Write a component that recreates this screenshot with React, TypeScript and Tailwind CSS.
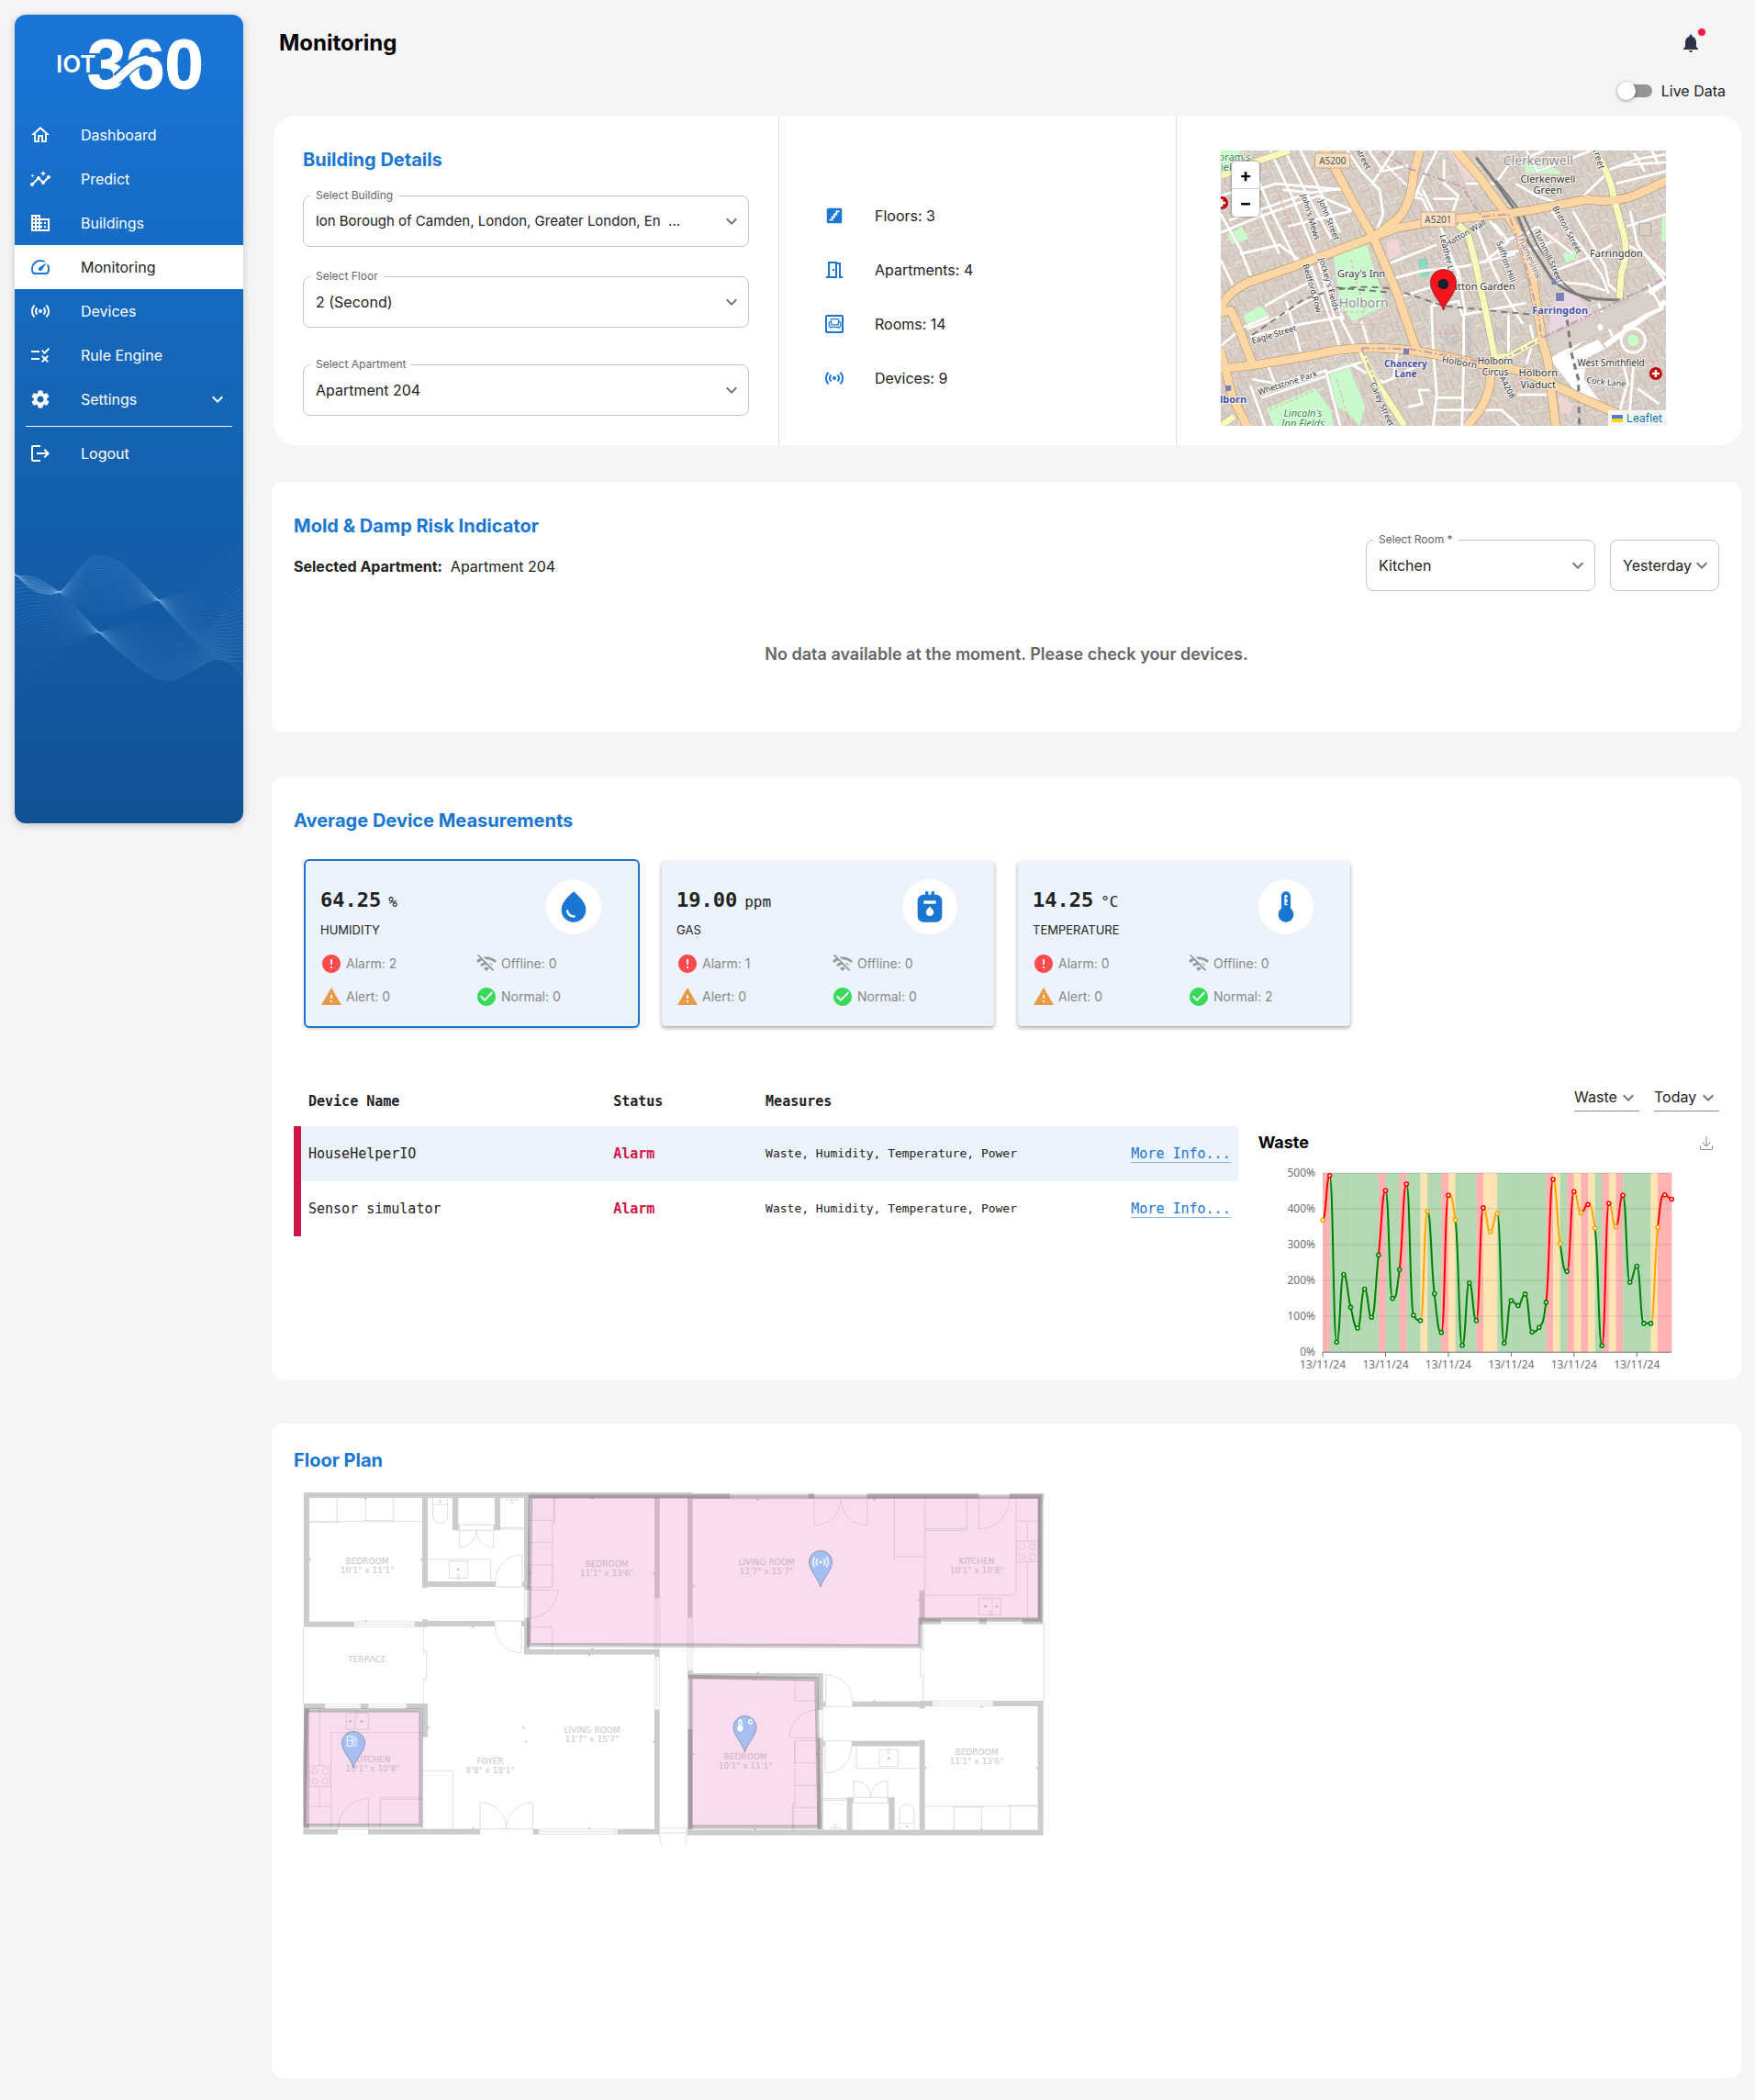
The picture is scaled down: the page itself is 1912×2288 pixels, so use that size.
import type { ReactNode } from "react";
import {
  MdBusiness,
  MdCheckCircle,
  MdDeviceThermostat,
  MdError,
  MdGasMeter,
  MdInsights,
  MdKeyboardArrowDown,
  MdLogout,
  MdNotifications,
  MdOutlineChair,
  MdOutlineHome,
  MdOutlineLocalGasStation,
  MdOutlineMeetingRoom,
  MdRule,
  MdSensors,
  MdSettings,
  MdSpeed,
  MdStairs,
  MdThermostat,
  MdWarning,
  MdWaterDrop,
  MdWifiOff,
} from "react-icons/md";

const MONO = "font-['DejaVu_Sans_Mono','Liberation_Mono',monospace]";

/* ---------- sidebar ---------- */

function Logo() {
  return (
    <svg viewBox="0 0 168 64" className="h-[64px] w-[168px]" role="img" aria-label="IOT 360">
      <text x="34" y="60" fontSize="76" fontWeight="700" fill="#fff" stroke="#fff" strokeWidth="1" fontFamily="Liberation Sans, Arial, sans-serif">
        360
      </text>
      <path d="M66 50C76 43 82 31 97 29" fill="none" stroke="#1975d2" strokeWidth="13" />
      <path d="M50 56C70 58 78 30 100 29" fill="none" stroke="#fff" strokeWidth="9" />
      <rect x="32" y="22" width="17" height="23" fill="#1975d2" />
      <text x="0" y="43" fontSize="26" fontWeight="600" fill="#fff" fontFamily="Inter, sans-serif">
        IOT
      </text>
    </svg>
  );
}

const waveX = [0, 16, 32, 49, 66, 82, 99, 116, 132, 149, 166, 182, 199, 216, 232, 248];
const waves = {
  crest: [315, 362, 383, 375, 318, 265, 262, 285, 328, 380, 438, 492, 540, 580, 600, 600],
  rise: [325, 324, 342, 378, 418, 437, 443, 440, 428, 410, 392, 378, 345, 300, 255, 215],
  low: [720, 670, 620, 575, 540, 518, 500, 482, 475, 475, 478, 490, 500, 480, 400, 330],
  dip: [325, 326, 345, 378, 425, 478, 530, 575, 615, 648, 662, 650, 622, 597, 605, 650],
};

function blend(a: number[], b: number[], t: number) {
  const pts = waveX.map((x, i) => [x, (a[i] + (b[i] - a[i]) * t - 200) / 3]);
  let d = `M${pts[0][0]} ${pts[0][1].toFixed(1)}`;
  for (let i = 0; i < pts.length - 1; i++) {
    const p0 = pts[Math.max(i - 1, 0)];
    const p1 = pts[i];
    const p2 = pts[i + 1];
    const p3 = pts[Math.min(i + 2, pts.length - 1)];
    d += `C${(p1[0] + (p2[0] - p0[0]) / 6).toFixed(1)} ${(p1[1] + (p2[1] - p0[1]) / 6).toFixed(1)} ${(
      p2[0] -
      (p3[0] - p1[0]) / 6
    ).toFixed(1)} ${(p2[1] - (p3[1] - p1[1]) / 6).toFixed(1)} ${p2[0]} ${p2[1].toFixed(1)}`;
  }
  return d;
}

function Waves() {
  const steps = Array.from({ length: 30 }, (_, i) => i / 29);
  return (
    <svg viewBox="0 0 248 180" className="w-full" fill="none" stroke="#8fc0f0" strokeWidth="0.6" aria-hidden="true">
      {steps.map((t) => (
        <path key={`a${t}`} d={blend(waves.crest, waves.rise, t)} opacity={0.32 - t * 0.2} />
      ))}
      {steps.map((t) => (
        <path key={`b${t}`} d={blend(waves.dip, waves.low, t)} opacity={0.32 - t * 0.24} />
      ))}
    </svg>
  );
}

const nav = [
  { label: "Dashboard", Icon: MdOutlineHome },
  { label: "Predict", Icon: MdInsights },
  { label: "Buildings", Icon: MdBusiness },
  { label: "Monitoring", Icon: MdSpeed, active: true },
  { label: "Devices", Icon: MdSensors },
  { label: "Rule Engine", Icon: MdRule },
  { label: "Settings", Icon: MdSettings, expandable: true },
];

function Sidebar() {
  return (
    <aside className="my-4 ml-4 flex h-[881px] w-[249px] shrink-0 flex-col overflow-hidden rounded-xl bg-linear-to-b from-[#1976d8] to-[#115293] text-white shadow-[0_2px_10px_rgba(0,0,0,0.2)]">
      <a href="#home" className="mt-5 ml-[45px] block w-[168px]">
        <Logo />
      </a>
      <nav className="mt-[23px] flex flex-col">
        <ul className="flex flex-col">
          {nav.map(({ label, Icon, active, expandable }) => (
            <li key={label} className={active ? "h-12 bg-white text-[#222]" : "h-12"}>
              <a href={`#${label}`} className="flex h-full items-center px-4">
                <Icon className={active ? "size-6 text-[#1976d2]" : "size-6"} />
                <span className="ml-8 flex-1">{label}</span>
                {expandable && <MdKeyboardArrowDown className="size-6" />}
              </a>
            </li>
          ))}
        </ul>
        <hr className="mx-3 mt-[5px] mb-[5px] border-white" />
        <a href="#logout" className="flex h-12 items-center px-4">
          <MdLogout className="size-6" />
          <span className="ml-8">Logout</span>
        </a>
      </nav>
      <div className="mt-[68px]">
        <Waves />
      </div>
    </aside>
  );
}

/* ---------- form controls ---------- */

type SelectProps = { id: string; label: string; value: string; hideLabel?: boolean; dense?: boolean; className?: string };

function OutlinedSelect({ id, label, value, hideLabel, dense, className }: SelectProps) {
  return (
    <div className={`relative ${className ?? ""}`}>
      <label htmlFor={id} className={hideLabel ? "sr-only" : "absolute -top-2 left-2 bg-white px-1.5 text-xs leading-4 text-[#666]"}>
        {label}
      </label>
      <select
        id={id}
        className={`h-14 w-full appearance-none rounded-lg border border-[#c4c4c4] bg-white pr-6 pl-[13px] text-[#222] ${dense ? "text-[15px]" : ""}`}
      >
        <option>{value}</option>
      </select>
      <MdKeyboardArrowDown className="pointer-events-none absolute top-4 right-[7px] size-6 text-[#757575]" />
    </div>
  );
}

function UnderlinedSelect({ id, label, value }: { id: string; label: string; value: string }) {
  return (
    <div className="relative">
      <label htmlFor={id} className="sr-only">
        {label}
      </label>
      <select id={id} className="h-[31px] appearance-none border-b border-[#8c8c8c] bg-white pr-6 text-[#222]">
        <option>{value}</option>
      </select>
      <MdKeyboardArrowDown className="pointer-events-none absolute top-1 right-0 size-6 text-[#757575]" />
    </div>
  );
}

/* ---------- map ---------- */

const mx = (x: number) => (x - 77) / 2.562;
const my = (y: number) => (y - 492) / 3;

const streets = [
  "M215 492L275 640L330 800L420 1045", "M255 492L320 640L385 780", "M300 492L345 600L410 760", "M160 530L215 680L290 860",
  "M150 600L190 700L240 830", "M77 700L130 810L160 900", "M77 760L180 710L350 640L450 690", "M130 640L230 600L420 620",
  "M130 830L240 800L330 880", "M100 720L200 680L300 640", "M265 740L440 690", "M250 620L330 630L420 615", "M430 492L470 560L520 620L530 700L510 760",
  "M560 492L500 600L520 620", "M600 640L640 650L660 700", "M680 492L650 560L620 640", "M640 620L690 740L740 900L700 980L665 1000",
  "M700 520L700 600L740 640L725 690", "M670 650L740 650", "M760 600L850 600", "M550 860L680 800", "M560 910L640 885L760 870L900 830",
  "M580 970L660 940", "M665 1000L740 985L750 1030L930 990", "M740 880L760 1030", "M790 740L830 860L870 960L920 1060",
  "M840 730L880 790L860 810L810 860", "M870 790L905 770", "M820 710L860 770", "M150 1075L230 1040L340 970L390 920",
  "M77 1130L140 1070L210 1035", "M200 1000L260 960L330 920", "M260 985L300 1150", "M330 870L400 1100L410 1140", "M350 860L395 1040",
  "M160 1100L300 1060L420 1035", "M77 850L110 930", "M410 1040L450 1130", "M470 1050L490 1130", "M665 1000L670 1150L680 1290L670 1392",
  "M755 1030L755 1190L750 1392", "M680 1300L750 1300", "M680 1340L860 1340L910 1392", "M600 1330L640 1320L630 1275L660 1275",
  "M880 1030L880 1180", "M940 1060L950 1110L930 1190", "M850 830L960 810L1000 790", "M900 600L960 640L1010 660", "M850 590L880 540L980 492",
  "M930 492L960 560L1050 520L1110 492", "M1000 690L1080 800L1140 900L1160 960", "M960 740L1060 830", "M1060 690L1150 870L1160 930L1190 960",
  "M1090 640L1160 560", "M1180 600L1319 560", "M1150 560L1240 520L1319 505", "M1230 500L1260 560", "M1200 540L1319 530", "M1280 492L1300 540",
  "M1210 740L1319 700", "M1220 690L1240 800L1319 920", "M1210 800L1260 830L1319 900", "M1000 920L1100 930L1150 950", "M1020 880L1110 840L1170 800",
  "M900 790L960 740", "M160 1260L200 1392", "M165 1240L260 1260L370 1210L410 1392", "M190 1300L370 1230", "M210 1200L230 1260L330 1220",
  "M370 1220L480 1180", "M440 1190L530 1250L570 1230", "M480 1160L520 1250L590 1392", "M570 1150L560 1230L640 1190",
  "M1100 1250L1210 1260L1180 1392", "M1060 1200L1200 1190L1215 1260", "M1130 990L1170 1100", "M905 1290L960 1290L1000 1290", "M1230 1180L1215 1392",
  "M1270 930L1310 1010L1200 1070", "M1240 1270L1300 1320", "M77 640L130 620", "M490 492L530 560L600 540", "M540 540L590 600L640 640",
];
const majors = [
  "M370 492L400 560L450 670L500 770L530 850L570 960L610 1100L625 1145",
  "M77 1010Q90 960 150 925L260 880L400 820L500 775L570 745L690 720L870 700L950 685L1100 652Q1180 665 1240 635L1319 592",
  "M632 492L615 570Q605 690 560 725L515 765",
  "M735 492L800 580L850 660Q890 720 910 770L945 900L965 1040L975 1120L990 1180L1000 1280L1012 1392",
  "M77 1205L160 1195L300 1168L400 1145Q520 1125 660 1155L800 1190Q900 1195 1000 1255L1100 1310L1190 1355",
  "M77 1020L105 1015L130 1080L165 1190",
  "M77 1150L95 1230L110 1300L150 1392",
  "M830 1195Q835 1280 800 1340L765 1392",
];
const minors = [
  "M1120 492Q1165 570 1175 650L1195 740Q1220 820 1195 890L1190 975",
  "M740 735L765 760Q785 840 795 900L815 1010L842 1168L880 1165L965 1110",
  "M77 575L170 530L270 492",
  "M470 1150L500 1230L550 1320L590 1392",
  "M77 1392L115 1360",
];
const footways = [
  "M240 640L290 780L360 900", "M440 850L480 1020L350 1020", "M560 560L600 620", "M1060 860L1090 780L1140 760", "M90 1240L170 1230",
  "M420 1000L430 1060L520 1060", "M1190 1150L1240 1200L1290 1180", "M400 1240L440 1392", "M670 1090L750 1090L750 1140",
  "M920 1200L900 1300L960 1330", "M1270 830L1319 870", "M215 1340L340 1275", "M480 500L560 640",
];

type Label = { x: number; y: number; t: string; s?: number; c?: string; r?: number; w?: number; i?: boolean };
const mapLabels: Label[] = [
  { x: 963, y: 540, t: "Clerkenwell", s: 14, c: "#8d8d8d" },
  { x: 990, y: 597, t: "Clerkenwell" },
  { x: 990, y: 634, t: "Green" },
  { x: 1181, y: 841, t: "Farringdon" },
  { x: 469, y: 907, t: "Gray's Inn" },
  { x: 476, y: 1005, t: "Holborn", s: 14, c: "#8d8d8d" },
  { x: 800, y: 949, t: "Hatton Garden" },
  { x: 1024, y: 1025, t: "Farringdon", s: 11, c: "#4a50a8", w: 700 },
  { x: 593, y: 1199, t: "Chancery", s: 10, c: "#4a50a8", w: 700 },
  { x: 593, y: 1234, t: "Lane", s: 10, c: "#4a50a8", w: 700 },
  { x: 103, y: 1317, t: "olborn", c: "#4a50a8", w: 700 },
  { x: 843, y: 1191, t: "Holborn", s: 10 },
  { x: 843, y: 1227, t: "Circus", s: 10 },
  { x: 963, y: 1230, t: "Holborn" },
  { x: 963, y: 1270, t: "Viaduct" },
  { x: 1166, y: 1198, t: "West Smithfield", s: 10 },
  { x: 1152, y: 1258, t: "Cock Lane", s: 9, r: 6 },
  { x: 742, y: 1194, t: "Holborn", s: 10, r: 10 },
  { x: 306, y: 1361, t: "Lincoln's", c: "#2f8b3c", i: true },
  { x: 306, y: 1396, t: "Inn Fields", c: "#2f8b3c", i: true },
  { x: 115, y: 524, t: "oram's", c: "#2f8b3c" },
  { x: 100, y: 559, t: "Fields", c: "#2f8b3c" },
  { x: 228, y: 1102, t: "Eagle Street", s: 9, r: -17 },
  { x: 266, y: 1260, t: "Whetstone Park", s: 9, r: -18 },
  { x: 764, y: 770, t: "Hatton Wall", s: 9, r: -30 },
  { x: 320, y: 712, t: "John's Mews", s: 9, r: 73 },
  { x: 372, y: 722, t: "John Street", s: 9, r: 68 },
  { x: 325, y: 945, t: "Bedford Row", s: 9, r: 74 },
  { x: 372, y: 932, t: "Jockey's Fields", s: 9, r: 74 },
  { x: 705, y: 850, t: "Leather Lane", s: 9, r: 76 },
  { x: 866, y: 858, t: "Saffron Hill", s: 9, r: 70 },
  { x: 985, y: 842, t: "Turnmill Street", s: 9, r: 65 },
  { x: 1037, y: 755, t: "Britton Street", s: 9, r: 62 },
  { x: 930, y: 842, t: "Thameslink", s: 10, r: 66, c: "#8b7a70" },
  { x: 520, y: 1325, t: "Carey Street", s: 9, r: 66 },
  { x: 468, y: 522, t: "Street", s: 9, r: 62 },
  { x: 1122, y: 515, t: "Street", s: 10, r: 72 },
  { x: 870, y: 1270, t: "A4208", s: 9, r: 62 },
];

function StreetMap() {
  return (
    <svg viewBox="0 0 485 300" preserveAspectRatio="xMidYMid slice" className="h-[300px] w-full" role="img" aria-label="Map of Holborn, London">
      <defs>
        <pattern id="blocks" width="31" height="27" patternUnits="userSpaceOnUse" patternTransform="rotate(-22)">
          <rect width="31" height="27" fill="#e4dcd5" />
          <g fill="#d9d0c9" stroke="#c3b4a8" strokeWidth="0.7">
            <path d="M1 1h7v9H1zM8 1h6v11H8zM14 1h9v8h-9zM23 1h7v12h-7zM1 14h10v5H1zM1 19h10v7H1zM14 12h6v14h-6zM20 16h10v10H20z" />
          </g>
        </pattern>
      </defs>
      <rect width="485" height="300" fill="url(#blocks)" />
      <g transform="scale(0.3903 0.33333) translate(-77 -492)">
        <g fill="#c8facc">
          <path d="M392 835L485 798L505 880L525 950L535 1000L445 1050L410 1000Z" />
          <path d="M205 1335L340 1268L385 1340L392 1392H225Z" />
          <path d="M378 1215L430 1185L480 1330L465 1392L430 1350L400 1330Z" />
          <path d="M77 492H135L105 540L77 560Z" />
          <path d="M95 770L135 740L155 780L110 800Z" />
          <path d="M140 1030L190 1000L210 1030L150 1060Z" />
          <path d="M920 530L1010 550L1030 570L930 565Z" />
          <path d="M1030 830L1060 815L1080 840L1040 860Z" />
          <path d="M1308 700H1319V790H1308Z" />
        </g>
        <path d="M700 1075H740V1130H700ZM760 1040H780V1180H760ZM840 1070H870V1110H840Z" fill="#aab" fillOpacity="0.25" />
        <path
          d="M540 790L570 780L580 830L545 850ZM715 492L745 492L790 590L760 590ZM990 770L1020 760L1020 790L1000 800ZM1020 1290L1060 1320L1050 1355L1025 1350Z"
          fill="#efd5d3"
        />
        <path d="M1010 960L1060 950L1120 1030L990 1090Z" fill="#e8d6e3" />
        <path d="M630 850L650 845L658 900L636 906Z" fill="#87dfc0" stroke="#58b495" />
        <path d="M1000 1180L1130 1110L1150 1140L1100 1170L1090 1240L1140 1320L1060 1270Z" fill="#fff" />
        <g fill="none" stroke="#cbbfb6" strokeLinejoin="round">
          {streets.map((d) => (
            <path key={d} d={d} strokeWidth="4" vectorEffect="non-scaling-stroke" />
          ))}
        </g>
        <g fill="none" stroke="#fff" strokeLinejoin="round">
          {streets.map((d) => (
            <path key={d} d={d} strokeWidth="3" vectorEffect="non-scaling-stroke" />
          ))}
        </g>
        <path d="M1000 1180L1319 920M1150 1130L1319 985" fill="none" stroke="#fff" strokeWidth="6" vectorEffect="non-scaling-stroke" />
        <g fill="#d9d0c9" stroke="#c3b4a8">
          <path d="M990 1100L1115 1035L1135 1090L1005 1160Z" />
          <path d="M1125 1030L1270 955L1300 1005L1150 1080Z" />
          <path d="M672 1015L742 1010L742 1060L674 1060Z" />
          <path d="M1245 730H1278V770H1245Z" strokeWidth="4" />
        </g>
        <g fill="none" stroke="#f59a8c" strokeWidth="1" strokeDasharray="3 3">
          {footways.map((d) => (
            <path key={d} d={d} vectorEffect="non-scaling-stroke" />
          ))}
        </g>
        <g fill="none" stroke="#7b7b7b">
          <path d="M165 1095L300 985Q420 920 560 945L700 1000L960 1030" strokeWidth="2" strokeDasharray="7 5" vectorEffect="non-scaling-stroke" />
          <path d="M400 940L540 955" strokeWidth="2" strokeDasharray="7 5" vectorEffect="non-scaling-stroke" />
          <path d="M1040 1010L1055 1150L1075 1240L1078 1392" strokeWidth="3" strokeDasharray="7 5" vectorEffect="non-scaling-stroke" />
          <path d="M790 515L840 590L900 690L935 790L1000 910Q1060 985 1190 980" strokeWidth="3" vectorEffect="non-scaling-stroke" />
          <path d="M845 590L920 700L960 800L1030 920Q1060 960 1110 985" strokeWidth="2" vectorEffect="non-scaling-stroke" />
        </g>
        <g fill="none" stroke="#a8a35e" strokeLinejoin="round">
          {minors.map((d) => (
            <path key={d} d={d} strokeWidth="8" vectorEffect="non-scaling-stroke" />
          ))}
        </g>
        <g fill="none" stroke="#b08a4e" strokeLinejoin="round">
          {majors.map((d) => (
            <path key={d} d={d} strokeWidth="10" vectorEffect="non-scaling-stroke" />
          ))}
        </g>
        <g fill="none" stroke="#f7fabf" strokeLinejoin="round">
          {minors.map((d) => (
            <path key={d} d={d} strokeWidth="7" vectorEffect="non-scaling-stroke" />
          ))}
        </g>
        <g fill="none" stroke="#fcd6a4" strokeLinejoin="round" strokeLinecap="round">
          {majors.map((d) => (
            <path key={d} d={d} strokeWidth="9" vectorEffect="non-scaling-stroke" />
          ))}
        </g>
        <path
          d="M525 495L600 550L750 610L805 708L880 700L920 830L965 1040L972 1105L1319 910M470 1138L600 1140L840 1190L970 1110M470 1138L560 1392"
          fill="none"
          stroke="#c0a0b4"
          strokeWidth="2"
          strokeDasharray="9 3 2 3"
          vectorEffect="non-scaling-stroke"
        />
      </g>
      <circle cx={mx(1228)} cy={my(1113)} r="13" fill="#d9d0c9" stroke="#fff" strokeWidth="3" />
      <circle cx={mx(1228)} cy={my(1113)} r="7" fill="#c8facc" stroke="#f59a8c" strokeDasharray="2 2" />
      <g fill="#7a80b8">
        <rect x={mx(1000)} y={my(912)} width="6" height="6" />
        <rect x={mx(1012)} y={my(957)} width="9" height="9" />
        <rect x={mx(587)} y={my(1140)} width="6" height="6" />
        <rect x={mx(90)} y={my(1260)} width="6" height="6" />
      </g>
      {[
        [1291, 1221],
        [80, 663],
      ].map(([x, y]) => (
        <g key={x}>
          <circle cx={mx(x)} cy={my(y)} r="7" fill="#bf0d0d" />
          <path d={`M${mx(x) - 4} ${my(y)}h8M${mx(x)} ${my(y) - 4}v8`} stroke="#fff" strokeWidth="2.4" />
        </g>
      ))}
      <g fontFamily="Noto Sans, sans-serif" textAnchor="middle" paintOrder="stroke" stroke="#fff" strokeOpacity="0.75" strokeWidth="2">
        {mapLabels.map(({ x, y, t, s = 11, c = "#333", r = 0, w = 400, i }) => (
          <text
            key={`${t}${x}${y}`}
            x={mx(x)}
            y={my(y)}
            fontSize={s}
            fill={c}
            fontWeight={w}
            fontStyle={i ? "italic" : "normal"}
            transform={`rotate(${r} ${mx(x)} ${my(y)})`}
          >
            {t}
          </text>
        ))}
      </g>
      {[
        { x: 389, y: 525, t: "A5200" },
        { x: 684, y: 717, t: "A5201" },
      ].map(({ x, y, t }) => (
        <g key={t}>
          <rect x={mx(x) - 19} y={my(y) - 8} width="38" height="16" rx="1" fill="#f8e0c4" stroke="#cda880" />
          <text x={mx(x)} y={my(y) + 4} textAnchor="middle" fontSize="10" fontFamily="Noto Sans, sans-serif" fill="#555">
            {t}
          </text>
        </g>
      ))}
      <path
        d="M242.500 174C240 165 228.500 156 228.500 143.500A14 14 0 0 1 256.500 143.500C256.500 156 245 165 242.500 174Z"
        fill="#f8141c"
        stroke="#8b1a1a"
        strokeWidth="0.8"
      />
      <circle cx="242.500" cy="145.500" r="5.700" fill="#16202c" />
    </svg>
  );
}

/* ---------- measurement cards ---------- */

const measures = [
  { name: "HUMIDITY", value: "64.25", unit: "%", Icon: MdWaterDrop, counts: [2, 0, 0, 0], active: true },
  { name: "GAS", value: "19.00", unit: "ppm", Icon: MdGasMeter, counts: [1, 0, 0, 0] },
  { name: "TEMPERATURE", value: "14.25", unit: "°C", Icon: MdThermostat, counts: [0, 0, 0, 2] },
];

function Count({ icon, children }: { icon: ReactNode; children: ReactNode }) {
  return (
    <span className="flex h-9 items-center gap-1">
      {icon}
      <span>{children}</span>
    </span>
  );
}

function MeasureCard({ name, value, unit, Icon, counts, active }: (typeof measures)[number]) {
  return (
    <button
      type="button"
      className={`flex h-[180px] w-[362px] flex-col rounded-sm bg-[#ecf3fc] pt-5 pl-4 text-left shadow-[0_2px_4px_rgba(0,0,0,0.35)] ${
        active ? "outline-2 outline-[#1976d2]" : ""
      }`}
    >
      <span className="flex w-full justify-between pr-[40px]">
        <span className="block text-[#222]">
          <span className={`mt-[7px] block leading-8 ${MONO}`}>
            <strong className="text-[22px]">{value}</strong>
            <span className="ml-2 text-base">{unit}</span>
          </span>
          <span className="block text-[13px] leading-7">{name}</span>
        </span>
        <span className="flex size-[60px] items-center justify-center rounded-full bg-white">
          <Icon className="size-10 text-[#1976d2]" />
        </span>
      </span>
      <span className="mt-[5px] grid w-[338px] grid-cols-2 text-sm text-[#888]">
        <Count icon={<MdError className="size-6 text-[#ff4b4b]" />}>Alarm: {counts[0]}</Count>
        <Count icon={<MdWifiOff className="size-6 text-[#999]" />}>Offline: {counts[1]}</Count>
        <Count icon={<MdWarning className="size-6 text-[#e89a45]" />}>Alert: {counts[2]}</Count>
        <Count icon={<MdCheckCircle className="size-6 text-[#3bd959]" />}>Normal: {counts[3]}</Count>
      </span>
    </button>
  );
}

/* ---------- waste chart ---------- */

const series = [
  368, 493, 28, 217, 125, 67, 176, 97, 271, 451, 150, 230, 469, 103, 88, 393, 163, 55, 438, 369, 19, 193, 88, 403, 336, 387, 25, 144,
  130, 162, 56, 69, 139, 482, 303, 225, 448, 389, 412, 346, 18, 415, 350, 438, 195, 240, 80, 80, 348, 439, 427,
];
const left = 70;
const top = 15;
const stepX = 380 / 50;
const px = (i: number) => left + i * stepX;
const py = (v: number) => top + 195 - (v / 500) * 195;
const level = (v: number) => (v >= 400 ? "#ff0000" : v >= 300 ? "#ffa500" : "#008000");
const clamp = (v: number, a: number, b: number) => Math.min(Math.max(v, Math.min(a, b)), Math.max(a, b));

// Control points on either side of each sample, kept inside the neighbouring values.
const controls = series.map((v, i) => {
  const y = py(v);
  if (i === 0 || i === series.length - 1) return { before: y, after: y };
  const prev = py(series[i - 1]);
  const next = py(series[i + 1]);
  const after = clamp(y + (next - prev) / 4, y, next);
  const before = clamp(y - (after - y), prev, y);
  return { before, after: y + (y - before) };
});

function WasteChart() {
  return (
    <svg viewBox="0 0 502 232" className="w-full" role="img" aria-label="Waste by time">
      {series.slice(1).map((v, i) => (
        <rect key={i} x={px(i)} y={top} width={stepX} height="195" fill={level(v)} fillOpacity="0.3" />
      ))}
      {[0, 100, 200, 300, 400, 500].map((v) => (
        <g key={v}>
          <line x1={left} x2={left + 380} y1={py(v)} y2={py(v)} stroke="#6e7079" strokeOpacity={v === 0 ? 1 : 0.25} />
          <text x={left - 8} y={py(v) + 4} textAnchor="end" fontSize="12" fill="#6e7079" fontFamily="Noto Sans, sans-serif">
            {v}%
          </text>
        </g>
      ))}
      {[0, 9, 18, 27, 36, 45].map((i) => (
        <g key={i}>
          <line x1={px(i)} x2={px(i)} y1={top + 195} y2={top + 200} stroke="#6e7079" />
          <text x={px(i)} y={top + 213} textAnchor="middle" fontSize="12" fill="#6e7079" fontFamily="Noto Sans, sans-serif">
            13/11/24
          </text>
        </g>
      ))}
      {series.slice(1).map((v, i) => (
        <path
          key={i}
          d={`M${px(i)} ${py(series[i])}C${px(i) + stepX / 2} ${controls[i].after} ${px(i + 1) - stepX / 2} ${controls[i + 1].before} ${px(i + 1)} ${py(v)}`}
          fill="none"
          stroke={level(v)}
          strokeWidth="2"
        />
      ))}
      {series.map((v, i) => (
        <circle key={i} cx={px(i)} cy={py(v)} r="2" fill="#fff" stroke={level(v)} strokeWidth="1.6" />
      ))}
    </svg>
  );
}

/* ---------- floor plan ---------- */

const wallRects: [number, number, number, number][] = [
  [63, 198, 1164, 18], [63, 216, 18, 422], [81, 620, 147, 18], [425, 620, 43, 18], [450, 216, 18, 294], [450, 613, 18, 7],
  [549, 216, 19, 106], [687, 216, 18, 106], [568, 304, 4, 18], [683, 304, 4, 18], [783, 216, 18, 301], [783, 608, 18, 120],
  [468, 489, 222, 18], [776, 489, 7, 18], [468, 618, 220, 18], [774, 618, 9, 18], [801, 711, 425, 17], [1209, 216, 17, 329],
  [1209, 728, 17, 9], [1209, 908, 17, 408], [61, 1298, 113, 18], [273, 1298, 366, 18], [812, 1298, 19, 18], [1088, 1298, 121, 18],
  [63, 888, 69, 18], [248, 888, 26, 18], [398, 888, 70, 18], [450, 906, 18, 92], [63, 906, 18, 392],
];

function PlanHalf() {
  return (
    <g>
      <g fill="#ccc">
        {wallRects.map(([x, y, w, h]) => (
          <rect key={`${x}-${y}`} x={x} y={y} width={w} height={h} />
        ))}
      </g>
      <g fill="#fafafc" stroke="#dedee2" strokeWidth="2">
        <path d="M228 620H425V638H228ZM132 890H248V906H132ZM274 890H398V906H274ZM831 1298H1088V1316H831ZM1209 545H1226V708H1209ZM1209 737H1226V908H1209Z" />
        <path d="M237 629H415M142 899H240M283 899H390M840 1307H1080M1217 555V700M1217 747V900" />
        <path d="M237 620V638M415 620V638M838 1298V1316M1081 1298V1316M1209 554H1226M1209 745H1226" fill="none" />
      </g>
      <g fill="none" stroke="#d8d8d8" strokeWidth="2.500">
        <path d="M61 638V888M455 638V727M464 716V810M455 800V888M455 716H464M455 810H464" />
        <path d="M81 293H450M172 216V293M265 216V293M355 216V293M81 296H180M258 290H355" />
        <path d="M485 216V275A24 24 0 0 0 533 275V216M485 238H533M568 304H687M572 322H683M572 322V377A55 55 0 0 0 627 322A55 55 0 0 0 683 377V322M705 313H783M705 318H783" />
        <path d="M468 417H674V489M538 423H599V478H538ZM565 466H572V482H565Z" />
        <path d="M725 216V222H760V216M743 216V228M736 232H750" />
        <path d="M690 489A86 86 0 0 1 776 401V489M690 507H776M688 618H774M688 636A86 86 0 0 0 774 723V636" />
        <path d="M785 517V608M801 517H893A92 92 0 0 1 801 608M801 289H875V508H801M801 361H875M801 435H880M880 216V304M875 435V508M801 638H875V711M883 216V300" />
        <path d="M450 998V1298M450 1108H550V1298M639 1298V1211A86 86 0 0 1 725 1298A86 86 0 0 1 812 1211V1298Z" />
        <path d="M115 906V1092M152 1298V983H450M202 919H274V973H202ZM230 919V973M236 912V932H242M81 1092H150V1160H81ZM115 1160V1225M81 1225H150M175 1298A98 98 0 0 1 274 1199V1298M313 1298V1195H450M313 1201H450M174 1300H273" />
        <circle cx="99" cy="1109" r="10" />
        <circle cx="133" cy="1109" r="10" />
        <circle cx="99" cy="1142" r="10" />
        <circle cx="133" cy="1142" r="10" />
      </g>
      <g fill="#bdbdbd">
        <circle cx="509" cy="227" r="3" />
        <circle cx="568" cy="450" r="4" />
        <circle cx="215" cy="946" r="4" />
        <circle cx="252" cy="946" r="4" />
        <path d="M81 413l6 5-6 5zM450 413l-6 5 6 5zM260 216h10l-5 6zM260 620h10l-5-6zM611 636h10l-5 6zM991 728h10l-5 6zM1001 216h10l-5 6zM1001 711h10l-5-6zM611 1298h10l-5-6zM991 1298h10l-5-6zM801 458l6 5-6 5zM1209 458l-6 5 6 5zM468 962l6 5-6 5zM1209 1008l-6 5 6 5z" />
      </g>
    </g>
  );
}

const rooms = [
  { x: 400, y: 1703, name: "BEDROOM", size: "10'1\" x 11'1\"" },
  { x: 661, y: 1706, name: "BEDROOM", size: "11'1\" x 13'6\"" },
  { x: 400, y: 1810, name: "TERRACE", size: "" },
  { x: 645, y: 1887, name: "LIVING ROOM", size: "11'7\" x 15'7\"" },
  { x: 534, y: 1921, name: "FOYER", size: "8'8\" x 18'1\"" },
  { x: 406, y: 1919, name: "KITCHEN", size: "10'1\" x 10'8\"" },
  { x: 835, y: 1704, name: "LIVING ROOM", size: "11'7\" x 15'7\"" },
  { x: 1064, y: 1703, name: "KITCHEN", size: "10'1\" x 10'8\"" },
  { x: 812, y: 1916, name: "BEDROOM", size: "10'1\" x 11'1\"" },
  { x: 1064, y: 1911, name: "BEDROOM", size: "11'1\" x 13'6\"" },
];

function Pin({ x, y, children }: { x: number; y: number; children: ReactNode }) {
  return (
    <g transform={`translate(${x} ${y})`}>
      <path d="M0 27C-2 18 -12.500 9 -12.500 0A12.500 12.500 0 0 1 12.500 0C12.500 9 2 18 0 27Z" fill="#a4bff2" stroke="#9a93a8" />
      {children}
    </g>
  );
}

function FloorPlan() {
  return (
    <svg viewBox="330 1620 812 400" className="w-[812px] max-w-full" role="img" aria-label="Second floor plan">
      <g transform="translate(310 1560) scale(0.33333)">
        <PlanHalf />
        <path d="M1226 198H1334V216H1226Z" fill="#ccc" />
        <path d="M1226 1295H1313M1226 1311H1313M1226 1311Q1226 1340 1232 1350M1313 1295V1350" fill="none" stroke="#d8d8d8" strokeWidth="2.500" />
        <path d="M783 962l-6 5 6 5zM791 1008l-6 5 6 5z" fill="#bdbdbd" />
      </g>
      <g transform="translate(700 1600) scale(0.33333) translate(1373 1397) rotate(180)">
        <PlanHalf />
      </g>
      <g fontFamily="DejaVu Sans, sans-serif" fontSize="9" fill="#c6c6c6" textAnchor="middle">
        {rooms.map(({ x, y, name, size }) => (
          <text key={`${x}-${y}`} x={x} y={y + 1}>
            {name}
            <tspan x={x} dy="10">
              {size}
            </tspan>
          </text>
        ))}
      </g>
      <g fill="#e377c2" fillOpacity="0.25" stroke="#000" strokeOpacity="0.2" strokeWidth="4.500">
        <path d="M578 1630.500H1133V1764.500H1002.500V1793.500L576 1792Z" />
        <path d="M333.500 1863.500H458.500V1989H331Z" />
        <path d="M752 1827L889.500 1829.500L892.500 1990.500H752Z" />
      </g>
      <Pin x={385} y={1899}>
        <MdOutlineLocalGasStation x={-10} y={-10} width={20} height={20} color="#edf2ff" />
      </Pin>
      <Pin x={894} y={1702}>
        <g fill="none" stroke="#fff" strokeWidth="1.500" strokeLinecap="round">
          <path d="M-6.500 -5A8 8 0 0 0 -6.500 5M-3.600 -3A5 5 0 0 0 -3.600 3M6.500 -5A8 8 0 0 1 6.500 5M3.600 -3A5 5 0 0 1 3.600 3" />
        </g>
        <circle r="1.600" fill="#fff" />
      </Pin>
      <Pin x={811.500} y={1882}>
        <MdDeviceThermostat x={-13} y={-10} width={20} height={20} color="#fff" />
        <circle cx="6" cy="-6" r="2" fill="none" stroke="#fff" strokeWidth="1.300" />
      </Pin>
    </svg>
  );
}

/* ---------- page ---------- */

function SectionTitle({ children }: { children: ReactNode }) {
  return <h2 className="text-xl leading-7 font-bold text-[#1976d2]">{children}</h2>;
}

const devices = ["HouseHelperIO", "Sensor simulator"];

export default function App() {
  return (
    <div className="flex min-h-screen items-start bg-[#f5f5f5] font-['Inter','Liberation_Sans',sans-serif] text-base text-[#222]">
      <Sidebar />
      <main className="min-w-0 flex-1 pt-4 pr-[15px] pb-6 pl-[31px]">
        <header className="flex h-[62px] items-center justify-between pr-[43px] pl-2">
          <h1 className="text-2xl font-bold text-black">Monitoring</h1>
          <button type="button" aria-label="Notifications" className="relative">
            <MdNotifications className="size-6 text-[#2e3347]" />
            <span className="absolute -top-1 -right-1 size-2 rounded-full bg-[#ff1744]" />
          </button>
        </header>
        <label className="ml-auto flex h-[42px] w-max items-center gap-[10px] pr-[17px]">
          <span className="relative flex h-5 w-[38px] items-center justify-end">
            <input type="checkbox" role="switch" className="peer h-[14px] w-[34px] appearance-none rounded-full bg-[#959595]" />
            <span className="absolute left-0 size-5 rounded-full bg-white shadow-[0_1px_4px_rgba(0,0,0,0.4)] peer-checked:left-[18px]" />
          </span>
          Live Data
        </label>

        <section className="mt-1.5 -mr-px ml-0.5 grid grid-cols-[550fr_434fr_616fr] rounded-3xl bg-white">
          <div className="px-8 pt-[34px] pb-8">
            <SectionTitle>Building Details</SectionTitle>
            <OutlinedSelect
              id="building"
              label="Select Building"
              value={"lon Borough of Camden, London, Greater London, En\u00a0 ..."}
              dense
              className="mt-[25px]"
            />
            <OutlinedSelect id="floor" label="Select Floor" value="2 (Second)" className="mt-8" />
            <OutlinedSelect id="apartment" label="Select Apartment" value="Apartment 204" className="mt-10" />
          </div>
          <ul className="flex flex-col border-x border-[#dedede] pt-20 pb-11 pl-12">
            {[
              { label: "Floors: 3", icon: <MdStairs className="size-[22px]" /> },
              { label: "Apartments: 4", icon: <MdOutlineMeetingRoom className="size-6" /> },
              {
                label: "Rooms: 14",
                icon: (
                  <span className="flex size-5 items-center justify-center rounded-xs border-2 border-current">
                    <MdOutlineChair className="size-[15px]" />
                  </span>
                ),
              },
              { label: "Devices: 9", icon: <MdSensors className="size-6" /> },
            ].map(({ label, icon }) => (
              <li key={label} className="flex flex-1 items-center gap-8">
                <span className="flex size-6 items-center justify-center text-[#1976d2]">{icon}</span>
                {label}
              </li>
            ))}
          </ul>
          <div className="pt-[38px] pr-[83px] pl-12">
            <div className="relative">
              <StreetMap />
              <div className="absolute top-3 left-3 flex w-[30px] flex-col overflow-hidden rounded-sm bg-white text-xl font-bold text-black shadow-[0_0_3px_rgba(0,0,0,0.6)]">
                <button type="button" aria-label="Zoom in" className="h-[30px] border-b border-[#ccc] leading-7">
                  +
                </button>
                <button type="button" aria-label="Zoom out" className="h-[30px] leading-7">
                  −
                </button>
              </div>
              <a href="#leaflet" className="absolute right-0 bottom-0 flex h-[17px] items-center gap-1 bg-white/80 px-1 text-xs text-[#0078a8]">
                <svg viewBox="0 0 12 8" className="h-2 w-3" aria-hidden="true">
                  <path d="M0 0h12v4H0z" fill="#4c7be1" />
                  <path d="M0 4h12v4H0z" fill="#ffd500" />
                </svg>
                Leaflet
              </a>
            </div>
          </div>
        </section>

        <section className="mt-10 rounded-xl bg-white px-6 pt-[34px] pb-[71px]">
          <div className="flex items-end justify-between">
            <div className="pb-[15px]">
              <SectionTitle>Mold &amp; Damp Risk Indicator</SectionTitle>
              <p className="mt-[18px] leading-6">
                <strong>Selected Apartment:</strong>&nbsp; Apartment 204
              </p>
            </div>
            <div className="flex gap-4">
              <OutlinedSelect id="room" label="Select Room *" value="Kitchen" className="w-[250px]" />
              <OutlinedSelect id="period" label="Period" value="Yesterday" hideLabel className="w-[119px]" />
            </div>
          </div>
          <p className="mt-[55px] text-center text-lg leading-7 font-semibold text-[#666]">
            No data available at the moment. Please check your devices.
          </p>
        </section>

        <section className="mt-12 rounded-xl bg-white px-6 pt-[34px] pb-2">
          <SectionTitle>Average Device Measurements</SectionTitle>
          <div className="mt-[30px] ml-[13px] flex flex-wrap gap-[26px]">
            {measures.map((m) => (
              <MeasureCard key={m.name} {...m} />
            ))}
          </div>
          <div className="mt-[55px] flex items-start gap-[22px]">
            <div className="min-w-0 flex-[1028]">
              <table className={`w-full table-fixed border-collapse text-left text-[15px] text-[#222] ${MONO}`}>
                <colgroup>
                  <col className="w-[33%]" />
                  <col className="w-[16%]" />
                  <col className="w-[34%]" />
                  <col />
                </colgroup>
                <thead>
                  <tr className="h-[54px]">
                    <th className="pl-3">Device Name</th>
                    <th className="pl-1.5">Status</th>
                    <th className="pl-2">Measures</th>
                    <th>
                      <span className="sr-only">Details</span>
                    </th>
                  </tr>
                </thead>
                <tbody>
                  {devices.map((d, i) => (
                    <tr key={d} className={i === 0 ? "h-[60px] bg-[#ecf3fc]" : "h-[60px]"}>
                      <td className="border-l-8 border-[#d01648] pl-2">{d}</td>
                      <td className="pl-1.5 font-bold text-[#d01648]">Alarm</td>
                      <td className="pl-2 text-[13px]">Waste, Humidity, Temperature, Power</td>
                      <td className="pr-2 text-right">
                        <a href={`#${d}`} className="border-b border-[#1976d2]/50 text-[#1976d2]">
                          More Info...
                        </a>
                      </td>
                    </tr>
                  ))}
                </tbody>
              </table>
            </div>
            <div className="min-w-0 flex-[502] pt-[7px]">
              <div className="flex justify-end gap-4">
                <UnderlinedSelect id="measure" label="Measure" value="Waste" />
                <UnderlinedSelect id="range" label="Range" value="Today" />
              </div>
              <div className="mt-5 flex items-center justify-between pr-[7px]">
                <h3 className="text-lg leading-7 font-bold text-black">Waste</h3>
                <button type="button" aria-label="Download chart">
                  <svg viewBox="0 0 14 15" className="h-[15px] w-[14px]" fill="none" stroke="#8a8a8a" aria-hidden="true">
                    <path d="M7 0V11M2.500 6.500L7 11L11.500 6.500M0.500 10.500V14.500H13.500V10.500" />
                  </svg>
                </button>
              </div>
              <div className="mt-1">
                <WasteChart />
              </div>
            </div>
          </div>
        </section>

        <section className="mt-12 rounded-xl bg-white px-6 pt-[26px] pb-[244px]">
          <SectionTitle>Floor Plan</SectionTitle>
          <div className="mt-[15px] ml-[10px]">
            <FloorPlan />
          </div>
        </section>
      </main>
    </div>
  );
}
